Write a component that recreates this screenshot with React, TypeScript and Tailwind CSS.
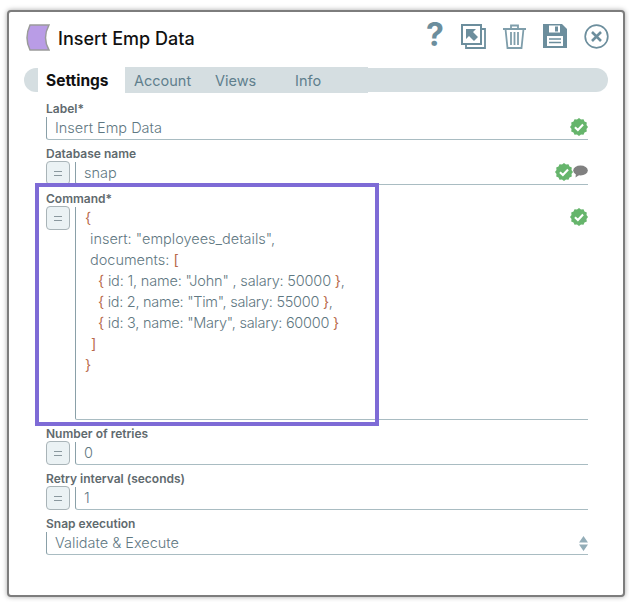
import React from "react";

const FONT = "font-['Inter','Noto_Sans',sans-serif]";

function Badge() {
  const pts: string[] = [];
  for (let i = 0; i < 24; i++) {
    const r = i % 2 === 0 ? 8 : 6.9;
    const a = (i * Math.PI) / 12;
    pts.push(`${8 + r * Math.cos(a)},${8 + r * Math.sin(a)}`);
  }
  return (
    <svg width="18" height="18" viewBox="0 0 16 16" className="shrink-0">
      <polygon points={pts.join(" ")} fill="#66b56c" />
      <path d="M4.4 8.2 L7 10.6 L11.6 5.8" fill="none" stroke="#fff" strokeWidth="1.9" />
    </svg>
  );
}

function Bubble() {
  return (
    <svg width="15" height="13" viewBox="0 0 15 13" className="shrink-0">
      <ellipse cx="7.5" cy="5.5" rx="7.3" ry="5" fill="#808080" />
      <path d="M3 8 L2.5 12.5 L7 9.5 Z" fill="#808080" />
    </svg>
  );
}

function EqBtn() {
  return (
    <div className="w-6 h-6 shrink-0 -mt-[1px] rounded-[4px] border border-[#a9b4b8] bg-[#ebf2f4] flex items-center justify-center">
      <div className="w-2 h-[5px] border-t border-b border-[#8a989e]" />
    </div>
  );
}

function Field({
  label,
  value,
  expr,
  icons,
  gap,
}: {
  label: string;
  value: string;
  expr?: boolean;
  icons?: React.ReactNode;
  gap?: string;
}) {
  return (
    <div className={gap}>
      <div className="h-[15px] leading-[14px] text-[12px] font-semibold text-[#5f6a6e]">{label}</div>
      <div className="flex h-[23px]">
        {expr && <div className="mr-[5px]"><EqBtn /></div>}
        <div className="flex-1 flex items-center justify-between border-l border-l-[#8aa0a8] border-b border-b-[#a9bcc2] rounded-bl-[3px] pl-2">
          <span className="text-[14.5px] font-light text-[#5f7882]">{value}</span>
          {icons && <span className="flex items-center -mt-[3px]">{icons}</span>}
        </div>
      </div>
    </div>
  );
}

const Brace = ({ children }: { children: React.ReactNode }) => (
  <span className="font-normal text-[#b8694a]">{children}</span>
);

export default function App() {
  return (
    <div className={`w-[629px] h-[602px] bg-white pt-[10px] pl-[7px] ${FONT}`}>
      <div className="w-[618px] h-[587px] bg-white rounded-[4px] border-2 border-[#7d7d7d] shadow-[0_0_5px_rgba(0,0,0,0.35)] relative">
        <div className="flex items-center justify-between h-[40px] mt-[6px] pl-[15px] pr-[14px]">
          <div className="flex items-center gap-[8px]">
            <svg width="26" height="28" viewBox="0 0 26 28">
              <path d="M6 1 H25 Q18 14 25 26 H6 Q0 14 6 1 Z" fill="#b99ce6" stroke="#9a9a9a" strokeWidth="1.5" />
            </svg>
            <span className="text-[18px] font-medium text-[#111]">Insert Emp Data</span>
          </div>
          <div className="flex items-center gap-[17px] -mt-[4px] text-[#6c8e9d]">
            <span className="text-[32px] font-bold leading-none w-[18px] text-center -mt-[2px]">?</span>
            <svg width="25" height="25" viewBox="0 0 25 25" fill="none" stroke="#6c8e9d" strokeWidth="2">
              <rect x="1" y="1" width="19" height="19" />
              <path d="M20 5 H24 V24 H5 V20" strokeWidth="1.8" />
              <path d="M5 5 H15 L12 8 L17 13 L13 17 L8 12 L5 15 Z" fill="#6c8e9d" stroke="none" />
            </svg>
            <svg width="23" height="25" viewBox="0 0 23 25" fill="none" stroke="#7f9eab" strokeWidth="1.8">
              <path d="M0 5 H23" strokeWidth="2" />
              <path d="M8 4 V1.5 H15 V4" />
              <path d="M2.5 5 L4.5 24 H18.5 L20.5 5" />
              <path d="M8 8 V21 M11.5 8 V21 M15 8 V21" />
            </svg>
            <svg width="24" height="24" viewBox="0 0 24 24">
              <path d="M0 0 H19 L24 5 V24 H0 Z" fill="#6c8e9d" />
              <rect x="6" y="1.5" width="11" height="7" fill="#fff" />
              <rect x="12" y="2.5" width="3" height="5" fill="#6c8e9d" />
              <rect x="4" y="12" width="16" height="10" fill="#fff" />
              <path d="M6 15 H18 M6 18.5 H18" stroke="#6c8e9d" strokeWidth="1.6" />
            </svg>
            <svg width="25" height="25" viewBox="0 0 25 25" fill="none" stroke="#6c8e9d" strokeWidth="1.7">
              <circle cx="12.5" cy="12.5" r="11.3" />
              <path d="M8 8 L17 17 M17 8 L8 17" strokeWidth="2.6" />
            </svg>
          </div>
        </div>

        <div className="mt-[10px] ml-[15px] mr-[15px] h-[24px] rounded-full bg-[#d5dee1] flex text-[14.5px]">
          <div className="ml-[14px] w-[87px] -mb-[1px] bg-white flex items-center pl-[8px] pt-[1px] text-[15.5px] font-bold text-[#111]">Settings</div>
          <div className="w-[243px] -my-[1px] bg-[#d5dee1] flex text-[#5f7f8d] items-center pt-[1px]">
            <span className="ml-[9px] w-[62px]">Account</span>
            <span className="ml-[19px] w-[80px]">Views</span>
            <span>Info</span>
          </div>
        </div>

        <div className="ml-[37px] mr-[35px] mt-[10px]">
          <Field label="Label*" value="Insert Emp Data" icons={<Badge />} />
          <Field
            label="Database name"
            value="snap"
            expr
            gap="mt-[7px]"
            icons={
              <>
                <Badge />
                <Bubble />
              </>
            }
          />
          <div className="mt-[7px]">
            <div className="h-[15px] leading-[14px] text-[12px] font-semibold text-[#5f6a6e]">Command*</div>
            <div className="flex h-[213px]">
              <div className="mr-[5px]"><EqBtn /></div>
              <div className="flex-1 flex justify-between items-start border-l border-b border-[#8aa0a8] border-b-[#a9bcc2] rounded-bl-[2px] pl-[9px]">
                <div className="text-[14.5px] font-light leading-[21px] text-[#5f7882] whitespace-pre">
                  <div><Brace>{"{"}</Brace></div>
                  <div className="pl-[5px]">{"insert: \"employees_details\","}</div>
                  <div className="pl-[5px]">{"documents: "}<Brace>[</Brace></div>
                  <div className="pl-[13px] tracking-[-0.18px]"><Brace>{"{"}</Brace>{" id: 1, name: \"John\" , salary: 50000 "}<Brace>{"}"}</Brace>{","}</div>
                  <div className="pl-[13px] tracking-[-0.28px]"><Brace>{"{"}</Brace>{" id: 2, name: \"Tim\", salary: 55000 "}<Brace>{"}"}</Brace>{","}</div>
                  <div className="pl-[13px] tracking-[-0.25px]"><Brace>{"{"}</Brace>{" id: 3, name: \"Mary\", salary: 60000 "}<Brace>{"}"}</Brace></div>
                  <div className="pl-[6px]"><Brace>]</Brace></div>
                  <div><Brace>{"}"}</Brace></div>
                </div>
                <div className="mt-[1px]"><Badge /></div>
              </div>
            </div>
          </div>
          <Field label="Number of retries" value="0" expr gap="mt-[7px]" />
          <Field label="Retry interval (seconds)" value="1" expr gap="mt-[7px]" />
          <Field
            label="Snap execution"
            value="Validate & Execute"
            gap="mt-[7px]"
            icons={
              <svg width="9" height="15" viewBox="0 0 9 15" className="mt-[3px]">
                <path d="M4.5 0 L9 6.5 H0 Z M0 8.5 H9 L4.5 15 Z" fill="#93adb8" />
              </svg>
            }
          />
        </div>

        <div className="absolute left-[26px] top-[171px] w-[344px] h-[243px] border-[4px] border-[#7e6bd6]" />
      </div>
    </div>
  );
}
